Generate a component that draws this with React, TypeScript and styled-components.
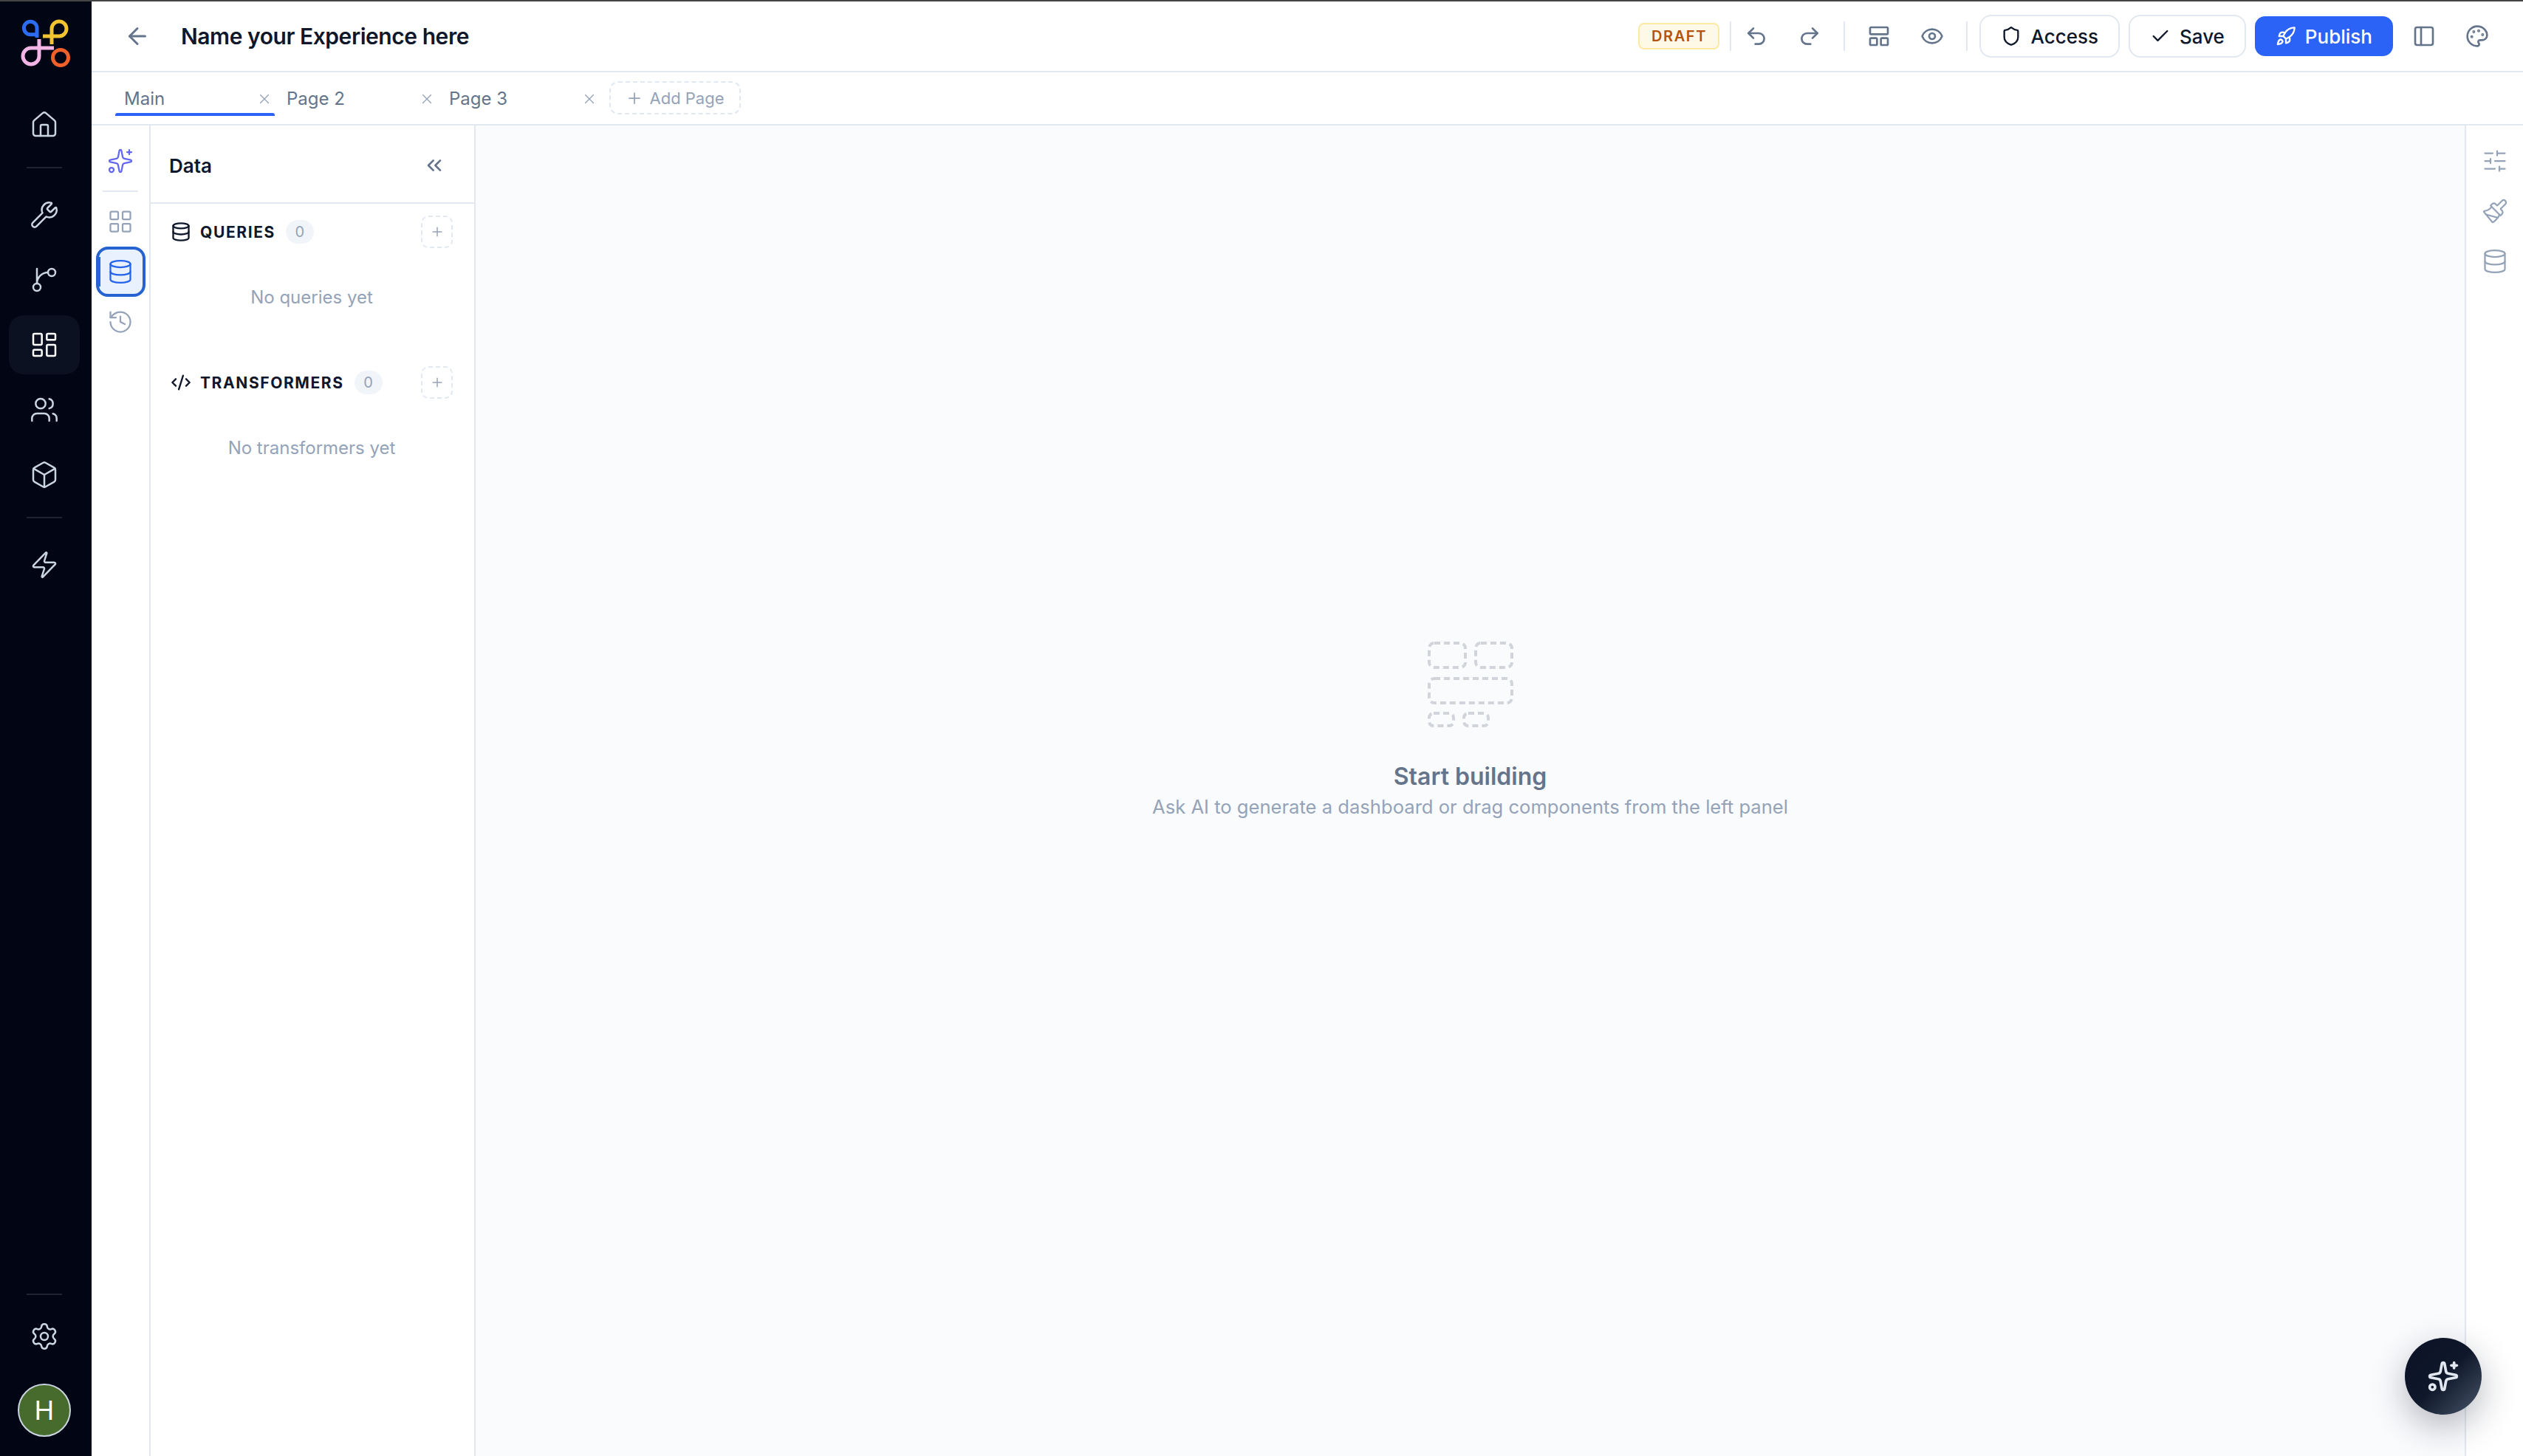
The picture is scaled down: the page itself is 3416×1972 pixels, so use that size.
import React from 'react';
import styled, { createGlobalStyle } from 'styled-components';
import {
  ArrowLeft,
  Box,
  Check,
  ChevronsLeft,
  CodeXml,
  Database,
  Eye,
  History,
  House,
  LayoutDashboard,
  LayoutGrid,
  LayoutPanelTop,
  Paintbrush,
  Palette,
  PanelLeft,
  Plus,
  Redo2,
  Rocket,
  Settings,
  Shield,
  SlidersHorizontal,
  Sparkles,
  Undo2,
  Users,
  Wrench,
  X,
  Zap,
} from 'lucide-react';

const GlobalStyle = createGlobalStyle`
  html, body, #root {
    height: 100%;
    margin: 0;
  }
  body {
    font-family: Inter, 'Noto Sans', sans-serif;
    background: #ffffff;
    overflow: hidden;
  }
  * {
    box-sizing: border-box;
  }
`;

const Page = styled.div`
  position: relative;
  display: flex;
  flex-direction: column;
  width: 3416px;
  height: 1972px;
  overflow: hidden;
`;

const TopLine = styled.div`
  height: 2px;
  flex: none;
  background: #454545;
`;

const Shell = styled.div`
  flex: 1;
  display: flex;
  min-height: 0;
`;

/* dark nav rail */
const Rail = styled.nav`
  width: 124px;
  flex: none;
  display: flex;
  flex-direction: column;
  background: #020513;
  padding: 14px 0 26px;
`;

const LogoWrap = styled.div`
  width: 84px;
  height: 84px;
  margin: 0 0 29px 20px;
`;

const RailGroup = styled.div`
  display: flex;
  flex-direction: column;
  gap: 8px;
`;

const RailItem = styled.div<{ $active?: boolean }>`
  width: 96px;
  height: 80px;
  margin-left: 12px;
  display: flex;
  align-items: center;
  justify-content: center;
  border-radius: 20px;
  color: ${p => (p.$active ? '#ffffff' : '#cbd5e1')};
  background: ${p => (p.$active ? '#0b1120' : 'transparent')};
`;

const RailDivider = styled.div`
  width: 48px;
  height: 2px;
  margin: 17px 0 23px 36px;
  background: #1e2430;
`;

const RailBottom = styled.div`
  margin-top: auto;
  display: flex;
  flex-direction: column;
`;

const BottomDivider = styled(RailDivider)`
  margin: 0 0 16px 36px;
`;

const Avatar = styled.div`
  width: 72px;
  height: 72px;
  margin: 24px 0 0 24px;
  border-radius: 50%;
  border: 2px solid #cbd5e1;
  background: #476b2d;
  color: #ffffff;
  font-size: 36px;
  display: flex;
  align-items: center;
  justify-content: center;
`;

const Main = styled.div`
  flex: 1;
  min-width: 0;
  display: flex;
  flex-direction: column;
`;

const TopBar = styled.header`
  height: 96px;
  flex: none;
  display: flex;
  align-items: center;
  padding: 0 34px;
  border-bottom: 2px solid #e2e8f0;
`;

const IconButton = styled.div<{ $color?: string }>`
  width: 56px;
  height: 56px;
  flex: none;
  display: flex;
  align-items: center;
  justify-content: center;
  color: ${p => p.$color || '#64748b'};
`;

const Title = styled.h1`
  margin: 0 0 0 31px;
  font-size: 30px;
  font-weight: 600;
  letter-spacing: -0.45px;
  color: #0f172a;
`;

const Actions = styled.div`
  margin-left: auto;
  display: flex;
  align-items: center;
`;

const DraftBadge = styled.span`
  width: 110px;
  height: 36px;
  display: flex;
  align-items: center;
  justify-content: center;
  border: 2px solid #fde9a4;
  border-radius: 8px;
  background: #fef9e7;
  color: #b45309;
  font-size: 20px;
  font-weight: 600;
  letter-spacing: 1.6px;
`;

const ToolGroup = styled.div`
  display: flex;
  gap: 16px;
`;

const BarDivider = styled.div<{ $spot?: 'first' | 'last' }>`
  width: 2px;
  height: 40px;
  background: #e2e8f0;
  margin: ${p => (p.$spot === 'first' ? '0 6px 0 14px' : p.$spot === 'last' ? '0 16px 0 18px' : '0 18px')};
`;

const OutlineButton = styled.div`
  height: 58px;
  display: flex;
  align-items: center;
  gap: 12px;
  padding: 0 27px;
  border: 2px solid #e2e8f0;
  border-radius: 16px;
  background: #ffffff;
  color: #0f172a;
  font-size: 26px;
  font-weight: 500;
`;

const PublishButton = styled.div`
  height: 54px;
  display: flex;
  align-items: center;
  gap: 12px;
  margin-left: 12px;
  padding: 0 28px;
  border-radius: 14px;
  background: #2b63f6;
  color: #ffffff;
  font-size: 26px;
  font-weight: 500;
`;

const ButtonRow = styled.div`
  display: flex;
  align-items: center;
  gap: 12px;
`;

const EndIcons = styled.div`
  display: flex;
  gap: 16px;
  margin-left: 14px;
`;

const TabBar = styled.div`
  height: 72px;
  flex: none;
  display: flex;
  padding: 12px 0 0 32px;
  gap: 4px;
  border-bottom: 2px solid #e2e8f0;
`;

const Tab = styled.div<{ $active?: boolean }>`
  position: relative;
  width: 216px;
  height: 47px;
  display: flex;
  align-items: center;
  justify-content: space-between;
  padding: 0 3px 0 12px;
  color: #64748b;
  font-size: 24px;

  &::after {
    content: '';
    display: ${p => (p.$active ? 'block' : 'none')};
    position: absolute;
    left: 0;
    right: 0;
    bottom: 0;
    height: 4px;
    border-radius: 3px 3px 0 0;
    background: #2b63f6;
  }
`;

const TabClose = styled.span`
  display: flex;
  color: #94a3b8;
`;

const AddPage = styled.div`
  width: 178px;
  height: 45px;
  margin-left: 9px;
  display: flex;
  align-items: center;
  justify-content: center;
  gap: 8px;
  border: 2px dashed #e2e8f0;
  border-radius: 12px;
  color: #94a3b8;
  font-size: 22px;
`;

const Workspace = styled.div`
  flex: 1;
  min-height: 0;
  display: flex;
`;

const ToolStrip = styled.aside`
  width: 80px;
  flex: none;
  display: flex;
  flex-direction: column;
  align-items: center;
  padding-top: 14px;
  border-right: 2px solid #e2e8f0;
`;

const StripItem = styled.div<{ $active?: boolean; $color?: string }>`
  position: relative;
  width: 67px;
  height: 68px;
  display: flex;
  align-items: center;
  justify-content: center;
  color: ${p => (p.$active ? '#2563eb' : p.$color || '#94a3b8')};
  ${p =>
    p.$active
      ? `
    border: 4px solid #2563d0;
    border-radius: 16px;
    background: #eaf1fe;
    &::before {
      content: '';
      position: absolute;
      left: -1px;
      top: 10px;
      bottom: 10px;
      width: 3px;
      background: #2563eb;
    }
  `
      : ''}
`;

const StripDivider = styled.div`
  width: 48px;
  height: 2px;
  margin: 6px 0;
  background: #e2e8f0;
`;

const DataPanel = styled.section`
  width: 440px;
  flex: none;
  border-right: 2px solid #e2e8f0;
`;

const PanelHeader = styled.div`
  height: 106px;
  display: flex;
  align-items: center;
  justify-content: space-between;
  padding: 4px 26px 0 25px;
  border-bottom: 2px solid #e2e8f0;
  font-size: 26px;
  font-weight: 600;
  color: #0f172a;
`;

const PanelBody = styled.div`
  padding: 16px 29px 0 27px;
`;

const SectionRow = styled.div`
  height: 44px;
  display: flex;
  align-items: center;
  color: #0f172a;
`;

const SectionLabel = styled.span`
  margin-left: 12px;
  font-size: 21px;
  font-weight: 700;
  letter-spacing: 1.6px;
`;

const CountBadge = styled.span`
  width: 38px;
  height: 32px;
  margin-left: 14px;
  display: flex;
  align-items: center;
  justify-content: center;
  border-radius: 16px;
  background: #f1f5f9;
  color: #94a3b8;
  font-size: 20px;
`;

const AddBox = styled.div`
  width: 43px;
  height: 44px;
  margin-left: auto;
  display: flex;
  align-items: center;
  justify-content: center;
  border: 2px dashed #e2e8f0;
  border-radius: 10px;
  color: #94a3b8;
`;

const EmptyText = styled.div`
  height: 32px;
  margin: 51px 0 77px;
  text-align: center;
  line-height: 32px;
  font-size: 24px;
  color: #94a3b8;
`;

const Canvas = styled.main`
  flex: 1;
  min-width: 0;
  display: flex;
  flex-direction: column;
  align-items: center;
  justify-content: center;
  padding-bottom: 166px;
  background: #fafbfd;
`;

const StartTitle = styled.div`
  margin-top: 47px;
  font-size: 32px;
  font-weight: 600;
  color: #64748b;
`;

const StartHint = styled.div`
  margin-top: 6px;
  font-size: 25.6px;
  color: #94a3b8;
`;

const RightStrip = styled.aside`
  width: 79px;
  flex: none;
  display: flex;
  flex-direction: column;
  align-items: center;
  gap: 32px;
  padding-top: 30px;
  border-left: 2px solid #e2e8f0;
  color: #94a3b8;
`;

const AskFab = styled.div`
  position: absolute;
  left: 3256px;
  top: 1812px;
  width: 104px;
  height: 104px;
  display: flex;
  align-items: center;
  justify-content: center;
  border-radius: 50%;
  background: linear-gradient(135deg, #0b1226 0%, #0f172a 50%, #475569 100%);
  box-shadow: 0 16px 48px rgba(15, 23, 42, 0.3);
  color: #e2e8f0;
`;

const Logo = () => (
  <svg width="84" height="84" viewBox="0 0 84 84" fill="none" strokeWidth="5">
    <path d="M30 35V22A8.8 8.8 0 1 0 21.2 30.8H28" stroke="#2b6cf0" />
    <path d="M50 44V23A10 10 0 1 1 60.5 33H38" stroke="#f4c430" />
    <path d="M33 37V60A11 11 0 1 1 22 49H53" stroke="#f2b5e6" />
    <circle cx="62" cy="62" r="10.5" stroke="#f0602a" />
  </svg>
);

const BranchIcon = () => (
  <svg width="40" height="40" viewBox="0 0 24 24" fill="none" stroke="currentColor" strokeWidth="1.5" strokeLinecap="round" strokeLinejoin="round">
    <path d="M15 6a9 9 0 0 0-9 9V3" />
    <circle cx="18" cy="6" r="3" />
    <circle cx="6" cy="18" r="3" />
  </svg>
);

const StartIllustration = () => (
  <svg width="116" height="116" viewBox="0 0 116 116" fill="none" stroke="#d1d5db" strokeWidth="4" strokeDasharray="8 5">
    <rect x="2" y="2" width="49" height="33" rx="7" />
    <rect x="65" y="2" width="49" height="33" rx="7" />
    <rect x="2" y="50" width="112" height="33" rx="7" />
    <rect x="2" y="97" width="33" height="17" rx="6" />
    <rect x="49" y="97" width="33" height="17" rx="6" />
  </svg>
);

const pages = ['Main', 'Page 2', 'Page 3'];

const sections = [
  { label: 'QUERIES', empty: 'No queries yet', icon: <Database size={28} strokeWidth={2} /> },
  { label: 'TRANSFORMERS', empty: 'No transformers yet', icon: <CodeXml size={28} strokeWidth={2} /> },
];

const App: React.FC = () => {
  return (
    <Page>
      <GlobalStyle />
      <TopLine />
      <Shell>
        <Rail>
          <LogoWrap>
            <Logo />
          </LogoWrap>
          <RailItem>
            <House size={40} strokeWidth={1.5} />
          </RailItem>
          <RailDivider />
          <RailGroup>
            <RailItem>
              <Wrench size={40} strokeWidth={1.5} />
            </RailItem>
            <RailItem>
              <BranchIcon />
            </RailItem>
            <RailItem $active>
              <LayoutDashboard size={40} strokeWidth={1.5} />
            </RailItem>
            <RailItem>
              <Users size={40} strokeWidth={1.5} />
            </RailItem>
            <RailItem>
              <Box size={40} strokeWidth={1.5} />
            </RailItem>
          </RailGroup>
          <RailDivider />
          <RailItem>
            <Zap size={40} strokeWidth={1.5} />
          </RailItem>
          <RailBottom>
            <BottomDivider />
            <RailItem>
              <Settings size={40} strokeWidth={1.5} />
            </RailItem>
            <Avatar>H</Avatar>
          </RailBottom>
        </Rail>

        <Main>
          <TopBar>
            <IconButton>
              <ArrowLeft size={36} strokeWidth={2} />
            </IconButton>
            <Title>Name your Experience here</Title>
            <Actions>
              <DraftBadge>DRAFT</DraftBadge>
              <BarDivider $spot="first" />
              <ToolGroup>
                <IconButton>
                  <Undo2 size={32} strokeWidth={2} />
                </IconButton>
                <IconButton>
                  <Redo2 size={32} strokeWidth={2} />
                </IconButton>
              </ToolGroup>
              <BarDivider />
              <ToolGroup>
                <IconButton>
                  <LayoutPanelTop size={32} strokeWidth={2} />
                </IconButton>
                <IconButton>
                  <Eye size={32} strokeWidth={2} />
                </IconButton>
              </ToolGroup>
              <BarDivider $spot="last" />
              <ButtonRow>
                <OutlineButton>
                  <Shield size={28} strokeWidth={2} />
                  Access
                </OutlineButton>
                <OutlineButton>
                  <Check size={28} strokeWidth={2} />
                  Save
                </OutlineButton>
              </ButtonRow>
              <PublishButton>
                <Rocket size={28} strokeWidth={2} />
                Publish
              </PublishButton>
              <EndIcons>
                <IconButton>
                  <PanelLeft size={32} strokeWidth={2} />
                </IconButton>
                <IconButton>
                  <Palette size={32} strokeWidth={2} />
                </IconButton>
              </EndIcons>
            </Actions>
          </TopBar>

          <TabBar>
            {pages.map((name, i) => (
              <Tab key={name} $active={i === 0}>
                {name}
                <TabClose>
                  <X size={22} strokeWidth={1.5} />
                </TabClose>
              </Tab>
            ))}
            <AddPage>
              <Plus size={24} strokeWidth={1.75} />
              Add Page
            </AddPage>
          </TabBar>

          <Workspace>
            <ToolStrip>
              <StripItem $color="#6366f1">
                <Sparkles size={36} strokeWidth={1.5} />
              </StripItem>
              <StripDivider />
              <StripItem>
                <LayoutGrid size={36} strokeWidth={1.5} />
              </StripItem>
              <StripItem $active>
                <Database size={36} strokeWidth={1.5} />
              </StripItem>
              <StripItem>
                <History size={36} strokeWidth={1.5} />
              </StripItem>
            </ToolStrip>

            <DataPanel>
              <PanelHeader>
                Data
                <IconButton>
                  <ChevronsLeft size={32} strokeWidth={2} />
                </IconButton>
              </PanelHeader>
              <PanelBody>
                {sections.map(s => (
                  <React.Fragment key={s.label}>
                    <SectionRow>
                      {s.icon}
                      <SectionLabel>{s.label}</SectionLabel>
                      <CountBadge>0</CountBadge>
                      <AddBox>
                        <Plus size={20} strokeWidth={1.75} />
                      </AddBox>
                    </SectionRow>
                    <EmptyText>{s.empty}</EmptyText>
                  </React.Fragment>
                ))}
              </PanelBody>
            </DataPanel>

            <Canvas>
              <StartIllustration />
              <StartTitle>Start building</StartTitle>
              <StartHint>Ask AI to generate a dashboard or drag components from the left panel</StartHint>
            </Canvas>

            <RightStrip>
              <SlidersHorizontal size={36} strokeWidth={1.5} />
              <Paintbrush size={36} strokeWidth={1.5} />
              <Database size={36} strokeWidth={1.5} />
            </RightStrip>
          </Workspace>
        </Main>
      </Shell>
      <AskFab>
        <Sparkles size={44} strokeWidth={2} />
      </AskFab>
    </Page>
  );
};

export default App;
